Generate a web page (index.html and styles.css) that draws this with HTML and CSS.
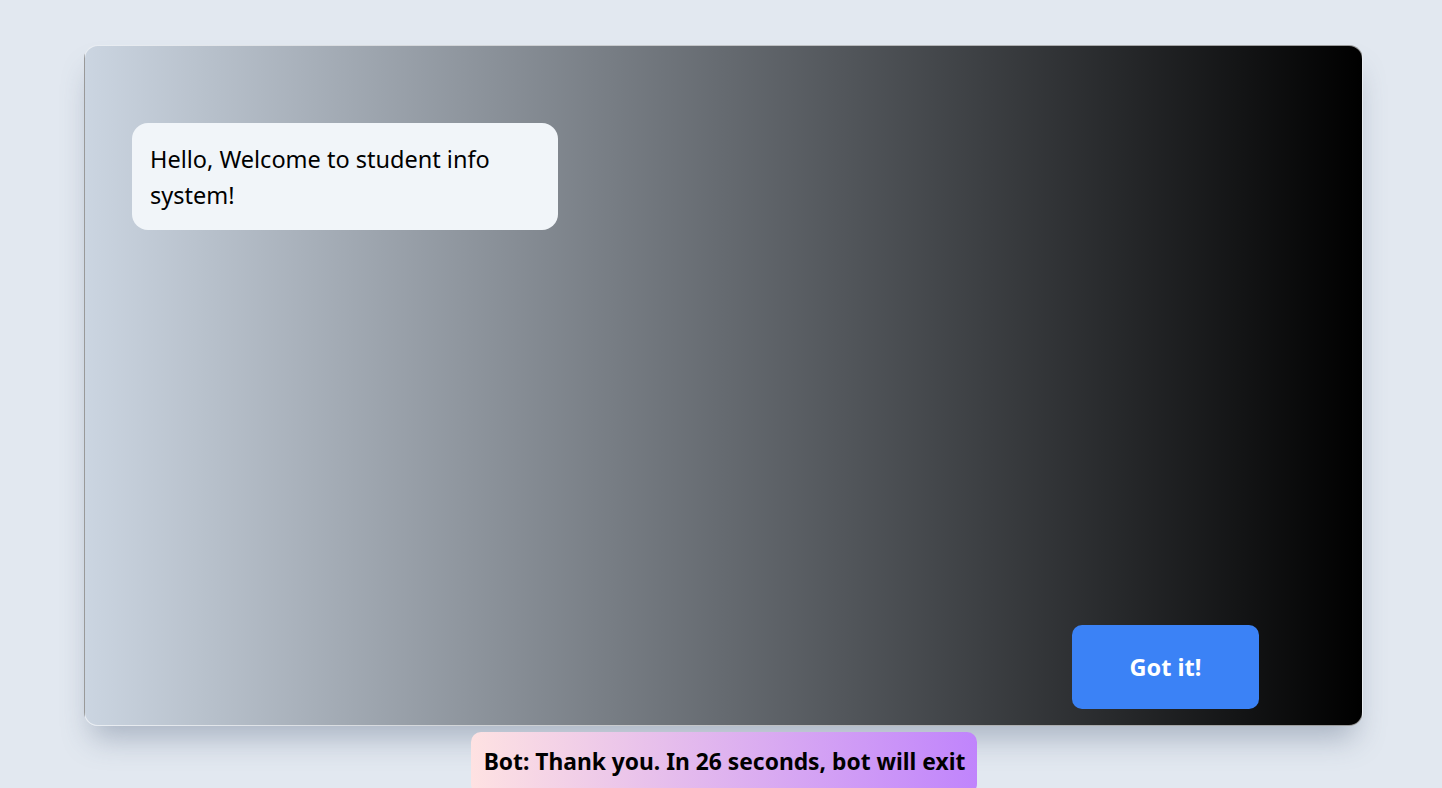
FILE: index.html
```html
<!DOCTYPE html>
<html lang="en">
<head>
<meta charset="utf-8">
<title>Student Info Bot</title>
<link rel="stylesheet" href="styles.css">
</head>
<body>
  <main class="page">
    <section class="card">
      <div class="bubble">Hello, Welcome to student info system!</div>
      <div class="actions">
        <button class="btn">Got it!</button>
      </div>
    </section>
    <div class="status">Bot: Thank you. In 26 seconds, bot will exit</div>
  </main>
</body>
</html>
```
FILE: styles.css
```css
* { box-sizing: border-box; }
html, body {
  margin: 0;
  height: 100%;
}
body {
  background: #e2e8f0;
  font-family: "Noto Sans", "Open Sans", sans-serif;
  overflow: hidden;
}
.page {
  display: flex;
  flex-direction: column;
  align-items: center;
  padding: 45px 79px 0 84px;
}
.card {
  width: 100%;
  height: 681px;
  border-radius: 14px;
  border: 1px solid rgba(255, 255, 255, 0.6);
  background: linear-gradient(to right, #cbd5e1 0%, #000 100%);
  box-shadow: 0 20px 30px -8px rgba(100, 116, 139, 0.45);
  display: flex;
  flex-direction: column;
  justify-content: space-between;
  padding: 77px 103px 16px 47px;
}
.bubble {
  width: 426px;
  background: #f1f5f9;
  border-radius: 16px;
  padding: 18px 18px 17px 18px;
  font-size: 23.5px;
  line-height: 36px;
  color: #000;
}
.actions {
  display: flex;
  justify-content: flex-end;
}
.btn {
  width: 187px;
  height: 84px;
  border: none;
  border-radius: 10px;
  background: #3b82f6;
  color: #fff;
  font-family: inherit;
  font-weight: 700;
  font-size: 23.5px;
  cursor: pointer;
}
.status {
  margin-top: 6px;
  margin-left: 1px;
  padding: 12px 12px 14px 13px;
  border-radius: 10px;
  background: linear-gradient(to right, #fee2e2, #c084fc);
  font-weight: 700;
  font-size: 22.8px;
  line-height: 36px;
  color: #000;
  white-space: nowrap;
}
```
